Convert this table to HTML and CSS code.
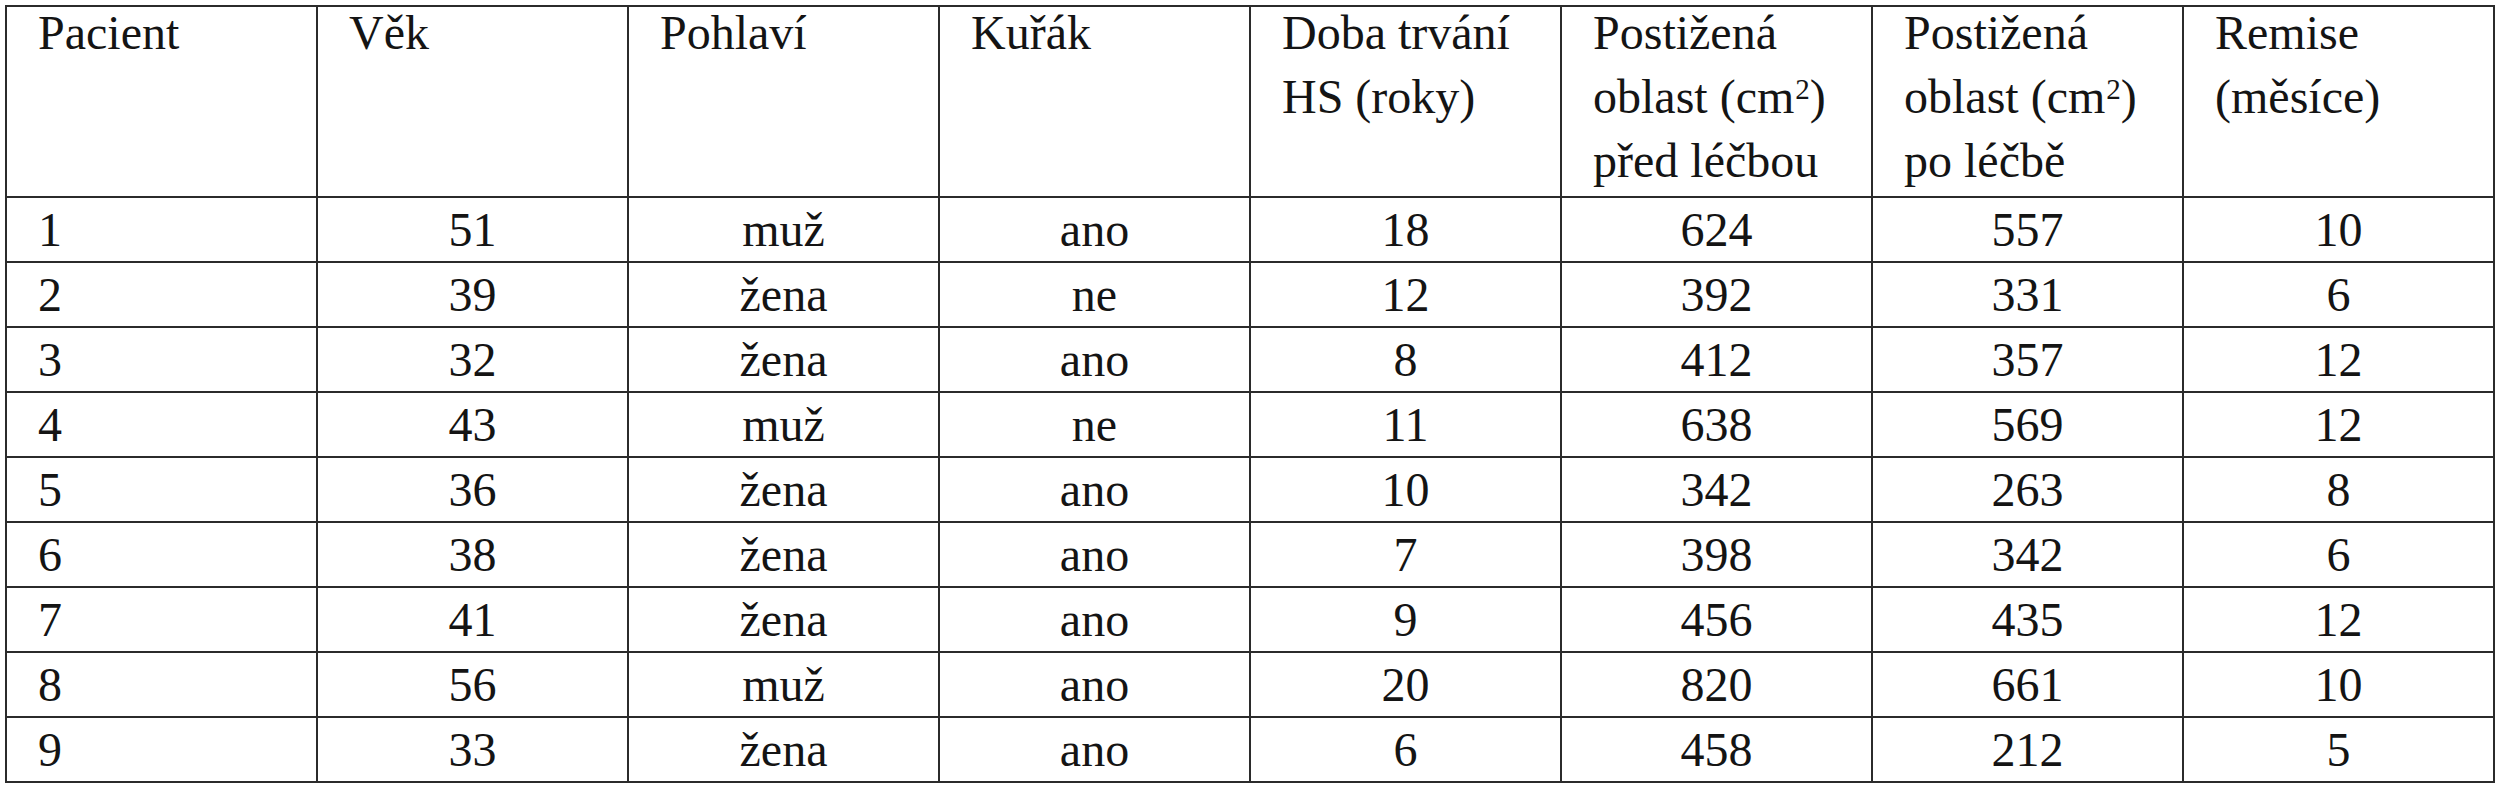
FILE: index.html
```html
<!DOCTYPE html>
<html lang="cs">
<head>
<meta charset="utf-8">
<title>Pacienti</title>
<link rel="stylesheet" href="styles.css">
</head>
<body>
<table class="data">
  <colgroup>
    <col class="c"><col class="c"><col class="c"><col class="c"><col class="c"><col class="c"><col class="c"><col class="c">
  </colgroup>
  <thead>
    <tr class="head">
      <th><div class="hd">Pacient</div></th>
      <th><div class="hd">Věk</div></th>
      <th><div class="hd">Pohlaví</div></th>
      <th><div class="hd">Kuřák</div></th>
      <th><div class="hd">Doba trvání<br>HS (roky)</div></th>
      <th><div class="hd">Postižená<br>oblast (cm<sup>2</sup>)<br>před léčbou</div></th>
      <th><div class="hd">Postižená<br>oblast (cm<sup>2</sup>)<br>po léčbě</div></th>
      <th><div class="hd">Remise<br>(měsíce)</div></th>
    </tr>
  </thead>
  <tbody>
    <tr><td class="first">1</td><td>51</td><td>muž</td><td>ano</td><td>18</td><td>624</td><td>557</td><td>10</td></tr>
    <tr><td class="first">2</td><td>39</td><td>žena</td><td>ne</td><td>12</td><td>392</td><td>331</td><td>6</td></tr>
    <tr><td class="first">3</td><td>32</td><td>žena</td><td>ano</td><td>8</td><td>412</td><td>357</td><td>12</td></tr>
    <tr><td class="first">4</td><td>43</td><td>muž</td><td>ne</td><td>11</td><td>638</td><td>569</td><td>12</td></tr>
    <tr><td class="first">5</td><td>36</td><td>žena</td><td>ano</td><td>10</td><td>342</td><td>263</td><td>8</td></tr>
    <tr><td class="first">6</td><td>38</td><td>žena</td><td>ano</td><td>7</td><td>398</td><td>342</td><td>6</td></tr>
    <tr><td class="first">7</td><td>41</td><td>žena</td><td>ano</td><td>9</td><td>456</td><td>435</td><td>12</td></tr>
    <tr><td class="first">8</td><td>56</td><td>muž</td><td>ano</td><td>20</td><td>820</td><td>661</td><td>10</td></tr>
    <tr><td class="first">9</td><td>33</td><td>žena</td><td>ano</td><td>6</td><td>458</td><td>212</td><td>5</td></tr>
  </tbody>
</table>
</body>
</html>
```

FILE: styles.css
```css
html, body {
  margin: 0;
  padding: 0;
  background: #ffffff;
}

body {
  font-family: "Liberation Serif", "Times New Roman", serif;
  color: #141414;
}

.data {
  margin: 5px 0 0 5px;
  width: 2490px;
  border-collapse: collapse;
  table-layout: fixed;
  font-size: 48px;
}

.data .c {
  width: 12.5%;
}

.data th,
.data td {
  border: 2px solid #2b2b2b;
  padding: 0 0 0 31px;
  font-family: "Liberation Serif", "Times New Roman", serif;
}

.data th {
  font-weight: normal;
  text-align: left;
  vertical-align: top;
  height: 189px;
  line-height: 64px;
}

.hd {
  margin-top: -6px;
}

.hd sup {
  font-size: 29px;
  line-height: 0;
  vertical-align: 14px;
  padding-left: 1px;
}

.data td {
  text-align: center;
  vertical-align: middle;
  height: 63px;
  line-height: 56px;
  padding: 0;
}

.data td.first {
  text-align: left;
  padding-left: 31px;
}
```
